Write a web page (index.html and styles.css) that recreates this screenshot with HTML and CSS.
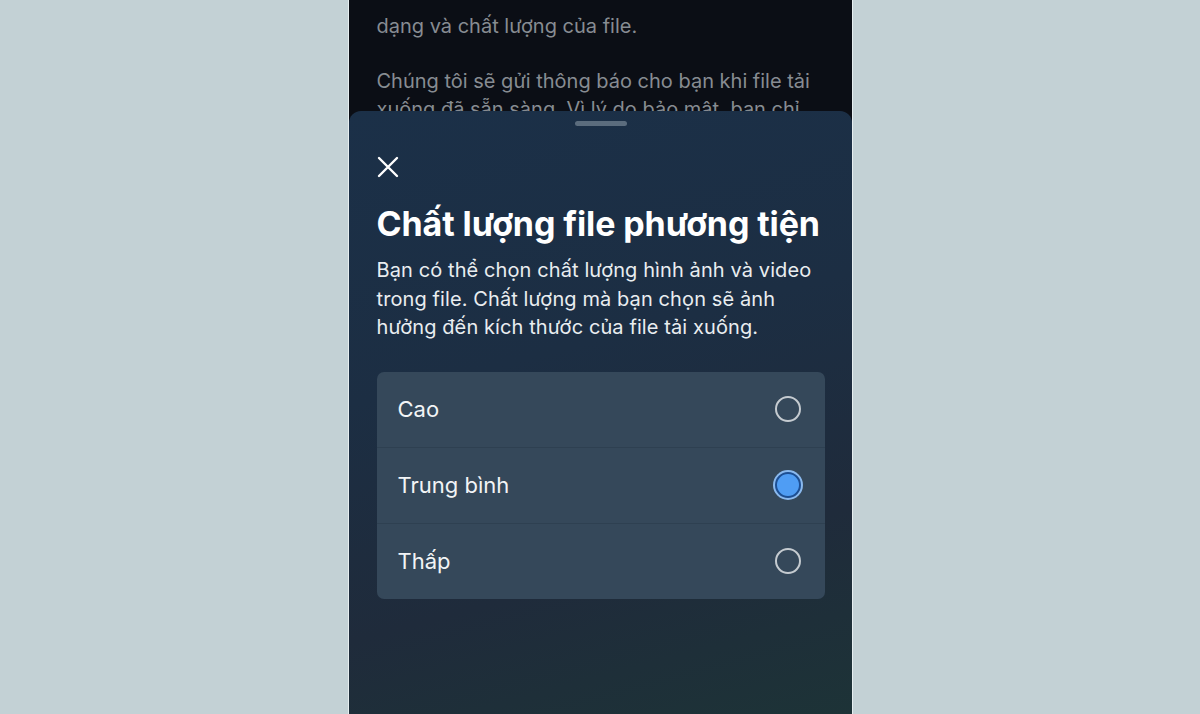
FILE: index.html
```html
<!DOCTYPE html>
<html lang="vi">
<head>
<meta charset="utf-8">
<title>Chất lượng file phương tiện</title>
<link rel="stylesheet" href="styles.css">
</head>
<body>
<div class="stage">
  <div class="phone">
    <div class="behind">
      <p>dạng và chất lượng của file.</p>
      <p>Chúng tôi sẽ gửi thông báo cho bạn khi file tải xuống đã sẵn sàng. Vì lý do bảo mật, bạn chỉ có thể tải file xuống trong vài ngày.</p>
    </div>
    <div class="sheet">
      <div class="handle"></div>
      <button class="close" aria-label="Đóng">
        <svg width="22" height="22" viewBox="0 0 22 22"><path d="M2 2 L20 20 M20 2 L2 20" stroke="#ffffff" stroke-width="2.4" stroke-linecap="round" fill="none"/></svg>
      </button>
      <h1 class="title">Chất lượng file phương tiện</h1>
      <p class="desc">Bạn có thể chọn chất lượng hình ảnh và video trong file. Chất lượng mà bạn chọn sẽ ảnh hưởng đến kích thước của file tải xuống.</p>
      <div class="card">
        <div class="row"><span class="label">Cao</span><span class="radio"></span></div>
        <div class="row"><span class="label">Trung bình</span><span class="radio on"></span></div>
        <div class="row"><span class="label">Thấp</span><span class="radio"></span></div>
      </div>
    </div>
  </div>
</div>
</body>
</html>
```
FILE: styles.css
```css
html, body {
  margin: 0;
  padding: 0;
  height: 100%;
}
body {
  background: #c3d1d5;
  font-family: Inter, "Noto Sans", "DejaVu Sans", sans-serif;
  overflow: hidden;
}
.stage {
  display: flex;
  justify-content: center;
  height: 714px;
}
.phone {
  width: 503px;
  height: 714px;
  background: #0b0e15;
  border-left: 1px solid #e6eef0;
  border-right: 1px solid #e6eef0;
  display: flex;
  flex-direction: column;
  overflow: hidden;
}
.behind {
  height: 111px;
  flex: none;
  overflow: hidden;
  padding: 13px 28px 0 28px;
  box-sizing: border-box;
  color: #878c92;
  font-size: 20px;
  line-height: 27.5px;
}
.behind p {
  margin: 0 0 27.5px 0;
}
.sheet {
  flex: 1;
  border-radius: 12px 12px 0 0;
  background: linear-gradient(165deg, #1b3048 0%, #1c2e43 40%, #1f2b3b 72%, #1d3337 100%);
  padding: 0 27px 0 28px;
  display: flex;
  flex-direction: column;
  color: #eef1f4;
}
.handle {
  width: 52px;
  height: 5px;
  border-radius: 3px;
  background: #5b6c7d;
  align-self: center;
  margin-top: 10px;
}
.close {
  margin-top: 30px;
  width: 22px;
  height: 22px;
  padding: 0;
  border: 0;
  background: none;
  display: block;
}
.close svg { display: block; }
.title {
  margin: 26px 0 0 0;
  font-size: 34px;
  line-height: 40px;
  font-weight: 700;
  letter-spacing: -0.1px;
  color: #ffffff;
  white-space: nowrap;
}
.desc {
  margin: 12px 0 0 0;
  font-size: 20px;
  line-height: 28.5px;
  letter-spacing: 0.1px;
  color: #e9edf0;
}
.card {
  margin-top: 30px;
  background: #35485a;
  border-radius: 7px;
  overflow: hidden;
}
.row {
  height: 75px;
  display: flex;
  align-items: center;
  justify-content: space-between;
  padding: 0 24px 0 21px;
  border-top: 1px solid #2e4051;
}
.row:first-child { border-top: 0; }
.label {
  font-size: 22px;
  color: #f2f4f6;
}
.radio {
  width: 26px;
  height: 26px;
  border-radius: 50%;
  border: 2px solid #c5cbd0;
  box-sizing: border-box;
}
.radio.on {
  border: 2px solid #1d4f93;
  background: #4f9df4;
  box-shadow: 0 0 0 2px #8ab9ee;
}
```
